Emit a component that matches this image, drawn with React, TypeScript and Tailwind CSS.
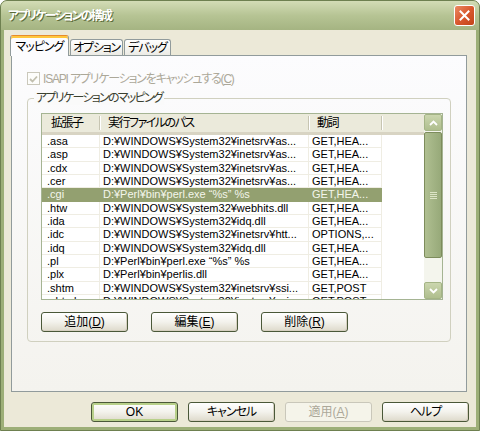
import React from "react";

type Row = { ext: string; path: string; verb: string; sel?: boolean };

const rows: Row[] = [
  { ext: ".asa", path: "D:¥WINDOWS¥System32¥inetsrv¥as...", verb: "GET,HEA..." },
  { ext: ".asp", path: "D:¥WINDOWS¥System32¥inetsrv¥as...", verb: "GET,HEA..." },
  { ext: ".cdx", path: "D:¥WINDOWS¥System32¥inetsrv¥as...", verb: "GET,HEA..." },
  { ext: ".cer", path: "D:¥WINDOWS¥System32¥inetsrv¥as...", verb: "GET,HEA..." },
  { ext: ".cgi", path: "D:¥Perl¥bin¥perl.exe “%s” %s", verb: "GET,HEA...", sel: true },
  { ext: ".htw", path: "D:¥WINDOWS¥System32¥webhits.dll", verb: "GET,HEA..." },
  { ext: ".ida", path: "D:¥WINDOWS¥System32¥idq.dll", verb: "GET,HEA..." },
  { ext: ".idc", path: "D:¥WINDOWS¥System32¥inetsrv¥htt...", verb: "OPTIONS,..." },
  { ext: ".idq", path: "D:¥WINDOWS¥System32¥idq.dll", verb: "GET,HEA..." },
  { ext: ".pl", path: "D:¥Perl¥bin¥perl.exe “%s” %s", verb: "GET,HEA..." },
  { ext: ".plx", path: "D:¥Perl¥bin¥perlis.dll", verb: "GET,HEA..." },
  { ext: ".shtm", path: "D:¥WINDOWS¥System32¥inetsrv¥ssi...", verb: "GET,POST" },
  { ext: ".shtml", path: "D:¥WINDOWS¥System32¥inetsrv¥ssi...", verb: "GET,POST" },
];

const jp = "font-['Liberation_Sans','Noto_Sans_CJK_JP',sans-serif] [font-feature-settings:'palt']";

function Chevron({ up }: { up?: boolean }) {
  return (
    <svg width="9" height="6" viewBox="0 0 9 6">
      <path
        d={up ? "M1 5 L4.5 1.5 L8 5" : "M1 1 L4.5 4.5 L8 1"}
        fill="none"
        stroke="#fff"
        strokeWidth="1.8"
      />
    </svg>
  );
}

function XpButton({
  children,
  isDefault,
  disabled,
}: {
  children: React.ReactNode;
  isDefault?: boolean;
  disabled?: boolean;
}) {
  if (disabled) {
    return (
      <div className="w-[87px] h-[20px] rounded-[3px] border border-[#C9C7BA] bg-[#F5F4EA] flex items-center justify-center text-[12px] leading-none text-[#ACA899] whitespace-nowrap">
        {children}
      </div>
    );
  }
  return (
    <div
      className={
        "w-[87px] h-[20px] rounded-[3px] border border-[#4A5838] bg-gradient-to-b from-[#FFFFFF] via-[#F3F2EC] to-[#DEDACB] flex items-center justify-center text-[12px] leading-none text-black whitespace-nowrap " +
        (isDefault ? "shadow-[inset_0_0_0_2px_#B8D08A]" : "shadow-[inset_-1px_-1px_0_#D6D0C0]")
      }
    >
      {children}
    </div>
  );
}

function HeaderCell({ w, label, pl }: { w: string; label: string; pl: string }) {
  return (
    <div className={`${w} flex items-center h-full`}>
      <div className={`flex-1 ${pl} text-[12px] leading-none text-black whitespace-nowrap tracking-[-1.5px]`}>{label}</div>
      <div className="w-px h-[14px] bg-[#C7C5B2] shadow-[1px_0_0_#FFFFFF]" />
    </div>
  );
}

export default function App() {
  return (
    <div className={`w-[480px] h-[431px] ${jp} bg-[#9DAF78] border border-[#6E8050] rounded-t-[7px] flex flex-col overflow-hidden`}>
      {/* title bar */}
      <div className="h-[29px] flex items-center pl-[7px] pr-[4px] bg-gradient-to-b from-[#D3DCB6] via-[#B6C494] to-[#A5B482]">
        <div className="flex-1 text-white font-bold text-[12px] leading-none tracking-[-1.8px] [text-shadow:1px_1px_0_#5B6B3A]">
          アプリケーションの構成
        </div>
        <div className="w-[21px] h-[21px] rounded-[3px] border border-white bg-gradient-to-br from-[#EA8A62] via-[#D9582E] to-[#C24418] flex items-center justify-center">
          <svg width="11" height="11" viewBox="0 0 11 11">
            <path d="M1.5 1.5 L9.5 9.5 M9.5 1.5 L1.5 9.5" stroke="#fff" strokeWidth="2" strokeLinecap="square" />
          </svg>
        </div>
      </div>

      {/* body */}
      <div className="flex-1 mx-[3px] mb-[3px] bg-[#ECE9D8] flex flex-col pt-[5px]">
        {/* tabs */}
        <div className="h-[21px] flex items-end pl-[6px] gap-[1px]">
          <div className="relative z-10 w-[59px] h-[21px] bg-[#FCFCFE] border border-[#919B9C] border-b-0 border-t-[#E68B2C] rounded-t-[3px] shadow-[inset_0_2px_0_#FFC73C] flex items-center justify-center text-[12px] leading-none pt-[1px] whitespace-nowrap tracking-[-1px]">
            マッピング
          </div>
          <div className="w-[53px] h-[16px] mb-[1px] bg-gradient-to-b from-[#FFFFFF] to-[#ECEBE5] border border-[#919B9C] border-b-0 rounded-t-[3px] flex items-center justify-center text-[12px] leading-none whitespace-nowrap tracking-[-1.2px]">
            オプション
          </div>
          <div className="w-[47px] h-[16px] mb-[1px] bg-gradient-to-b from-[#FFFFFF] to-[#ECEBE5] border border-[#919B9C] border-b-0 rounded-t-[3px] flex items-center justify-center text-[12px] leading-none whitespace-nowrap tracking-[-1px]">
            デバッグ
          </div>
        </div>

        {/* tab panel */}
        <div className="-mt-[1px] ml-[7px] mr-[9px] h-[337px] border border-[#919B9C] bg-gradient-to-b from-[#FCFCFE] to-[#F4F3EE] flex flex-col px-[15px] pt-[16px]">
          {/* checkbox */}
          <div className="flex items-center h-[13px] gap-[3px]">
            <div className="w-[13px] h-[13px] border border-[#CAC8BB] bg-[#FDFDFB] flex items-center justify-center">
              <svg width="9" height="8" viewBox="0 0 9 8">
                <path d="M1 4 L3.5 6.5 L8 1.5" fill="none" stroke="#C2C0B0" strokeWidth="1.8" />
              </svg>
            </div>
            <div className="text-[12px] leading-none text-[#ACA899] whitespace-nowrap tracking-[-1.2px]">
              ISAPI アプリケーションをキャッシュする(<span className="underline">C</span>)
            </div>
          </div>

          {/* group box */}
          <div className="relative mt-[13px] h-[244px] border border-[#D0D0BF] rounded-[4px] pl-[13px] pt-[14px]">
            <div className="absolute -top-[7px] left-[6px] px-[2px] bg-[#FAFAFA] text-[12px] leading-[13px] text-[#3A4030] whitespace-nowrap tracking-[-1.7px]">
              アプリケーションのマッピング
            </div>

            {/* list view */}
            <div className="w-[402px] h-[187px] border border-[#A5B493] bg-white flex overflow-hidden">
              <div className="w-[382px] flex flex-col">
                <div className="h-[21px] shrink-0 flex bg-[#EBEADB] border-b-[3px] border-[#D8D4C3]">
                  <HeaderCell w="w-[58px]" pl="pl-[9px]" label="拡張子" />
                  <HeaderCell w="w-[209px]" pl="pl-[8px]" label="実行ファイルのパス" />
                  <HeaderCell w="w-[73px]" pl="pl-[8px]" label="動詞" />
                  <div className="flex-1" />
                </div>
                <div className="flex-1 overflow-hidden">
                  {rows.map((r) => (
                    <div key={r.ext} className="flex h-[13.33px]">
                      <div
                        className={
                          "flex w-[340px] text-[11px] leading-[13px] whitespace-nowrap " +
                          (r.sel ? "bg-[#93A070] text-[#F4F6EC]" : "text-black border-b border-[#EFEDE3]")
                        }
                      >
                        <div className={"w-[58px] pl-[5px] overflow-hidden " + (r.sel ? "" : "border-r border-[#EFEDE3]")}>{r.ext}</div>
                        <div className={"w-[209px] pl-[3px] overflow-hidden " + (r.sel ? "" : "border-r border-[#EFEDE3]")}>{r.path}</div>
                        <div className={"w-[73px] pl-[3px] overflow-hidden " + (r.sel ? "" : "border-r border-[#EFEDE3]")}>{r.verb}</div>
                      </div>
                    </div>
                  ))}
                </div>
              </div>

              {/* scrollbar */}
              <div className="w-[18px] flex flex-col bg-[#F4F5ED]">
                <div className="h-[17px] rounded-[2px] border border-[#A4B485] bg-gradient-to-b from-[#CBD6AE] to-[#AFBE8E] flex items-center justify-center">
                  <Chevron up />
                </div>
                <div className="mt-[1px] h-[126px] rounded-[2px] border border-[#7D8C5C] bg-gradient-to-r from-[#B0BF91] via-[#A3B485] to-[#97A979] flex items-center justify-center">
                  <div className="flex flex-col gap-[1px]">
                    <div className="w-[7px] h-px bg-[#DCE4C6]" />
                    <div className="w-[7px] h-px bg-[#DCE4C6]" />
                    <div className="w-[7px] h-px bg-[#DCE4C6]" />
                    <div className="w-[7px] h-px bg-[#DCE4C6]" />
                  </div>
                </div>
                <div className="flex-1" />
                <div className="h-[17px] rounded-[2px] border border-[#A4B485] bg-gradient-to-b from-[#CBD6AE] to-[#AFBE8E] flex items-center justify-center">
                  <Chevron />
                </div>
              </div>
            </div>

            {/* add / edit / delete */}
            <div className="flex mt-[12px] gap-[23px]">
              <XpButton>
                追加(<span className="underline">D</span>)
              </XpButton>
              <XpButton>
                編集(<span className="underline">E</span>)
              </XpButton>
              <XpButton>
                削除(<span className="underline">R</span>)
              </XpButton>
            </div>
          </div>
        </div>

        {/* dialog buttons */}
        <div className="flex justify-end gap-[10px] pr-[7px] mt-[10px]">
          <XpButton isDefault>OK</XpButton>
          <XpButton>
            <span className="tracking-[-1px]">キャンセル</span>
          </XpButton>
          <XpButton disabled>
            適用(<span className="underline">A</span>)
          </XpButton>
          <XpButton>
            <span className="tracking-[-1px]">ヘルプ</span>
          </XpButton>
        </div>
      </div>
    </div>
  );
}
